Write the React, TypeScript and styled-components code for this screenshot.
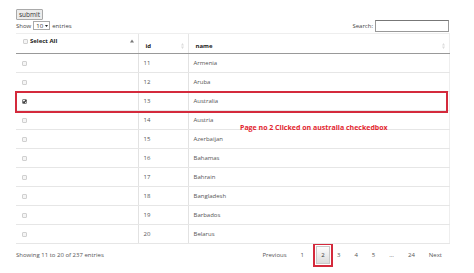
import React from "react";
import styled, { createGlobalStyle } from "styled-components";

const GlobalStyle = createGlobalStyle`
  html, body {
    margin: 0;
    padding: 0;
    background: #ffffff;
  }
  body {
    font-family: "Open Sans", "Liberation Sans", sans-serif;
    font-size: 6px;
    color: #444;
  }
`;

const Page = styled.div`
  width: 474px;
  height: 273px;
  padding: 9px 25px 0 16px;
  box-sizing: border-box;
  overflow: hidden;
`;

const SubmitButton = styled.button`
  display: block;
  height: 11px;
  padding: 0 2px;
  font-family: "Open Sans", "Liberation Sans", sans-serif;
  font-size: 6.5px;
  line-height: 9px;
  color: #333;
  background: #ececec;
  border: 1px solid #a9a9a9;
  border-radius: 1px;
`;

const Controls = styled.div`
  display: flex;
  justify-content: space-between;
  align-items: center;
  height: 13px;
  margin-top: -1px;
`;

const Label = styled.label`
  display: flex;
  align-items: center;
  gap: 2px;
  font-size: 6px;
  color: #444;
`;

const LengthSelect = styled.span`
  display: inline-flex;
  align-items: center;
  justify-content: space-between;
  width: 17px;
  height: 9px;
  padding: 0 1px 0 2px;
  border: 1px solid #aaa;
  font-size: 6px;
  line-height: 8px;
  color: #333;
  box-sizing: border-box;
`;

const SearchInput = styled.span`
  display: inline-block;
  width: 74px;
  height: 12px;
  border: 1px solid #999;
  border-top-color: #777;
  box-sizing: border-box;
`;

const TableWrap = styled.div`
  position: relative;
  margin-top: 1px;
`;

const Table = styled.table`
  width: 433px;
  border-collapse: collapse;
  table-layout: fixed;
  border-right: 1px solid #eee;
`;

const HeadCell = styled.th<{ $w: number; $top?: boolean }>`
  width: ${(p) => p.$w}px;
  height: 20px;
  padding: ${(p) => (p.$top ? "3px 4px 0 7px" : "5px 4px 0 7px")};
  vertical-align: ${(p) => (p.$top ? "top" : "middle")};
  text-align: left;
  font-size: 6px;
  font-weight: 700;
  color: #222;
  border-top: 1px solid #eee;
  border-left: 1px solid #e6e6e6;
  border-bottom: 1px solid #999;
  box-sizing: border-box;
  &:first-child {
    border-left: none;
  }
`;

const HeadInner = styled.div`
  display: flex;
  align-items: center;
  justify-content: space-between;
`;

const HeadTitle = styled.span`
  display: flex;
  align-items: center;
  gap: 2px;
`;

const Row = styled.tr`
  height: 19px;
`;

const Cell = styled.td`
  padding: 0 4px 0 5px;
  font-size: 6px;
  color: #555;
  border-left: 1px solid #e2e2e2;
  border-bottom: 1px solid #e6e6e6;
  white-space: nowrap;
  &:first-child {
    border-left: none;
    padding-left: 6px;
  }
`;

const Box = styled.span<{ $checked?: boolean }>`
  display: inline-block;
  width: 5px;
  height: 5px;
  border: 1px solid ${(p) => (p.$checked ? "#888" : "#d0d0d0")};
  background: ${(p) => (p.$checked ? "#eee" : "#f5f5f5")};
  border-radius: 1px;
  box-sizing: border-box;
  position: relative;
  vertical-align: middle;
`;

const CheckMark = styled.svg`
  position: absolute;
  left: -1px;
  top: -1px;
`;

const Highlight = styled.div`
  position: absolute;
  left: -1px;
  top: 58px;
  width: 433px;
  height: 22px;
  border: 2px solid #d42a3c;
  box-sizing: border-box;
  pointer-events: none;
`;

const Note = styled.div`
  position: absolute;
  left: 224px;
  top: 90px;
  font-size: 7px;
  font-weight: 700;
  color: #e3262f;
  white-space: nowrap;
`;

const Footer = styled.div`
  display: flex;
  justify-content: space-between;
  align-items: center;
  height: 21px;
`;

const Info = styled.div`
  font-size: 6px;
  color: #555;
`;

const Pager = styled.div`
  display: flex;
  align-items: center;
`;

const PageLink = styled.span`
  padding: 0 7px;
  font-size: 6px;
  color: #555;
`;

const Current = styled.span`
  display: inline-flex;
  padding: 1px;
  border: 2px solid #d42a3c;
  margin: 0 -3px 0 2px;
`;

const CurrentButton = styled.span`
  display: inline-flex;
  align-items: center;
  justify-content: center;
  width: 14px;
  height: 18px;
  box-sizing: border-box;
  border: 1px solid #c9c9c9;
  background: linear-gradient(#fdfdfd, #dcdcdc);
  font-size: 6px;
  color: #333;
`;

const SortIcon: React.FC<{ dir?: "up" | "both" }> = ({ dir = "both" }) =>
  dir === "up" ? (
    <svg width="4" height="4" viewBox="0 0 4 4">
      <path d="M0 3.5 L2 0.5 L4 3.5 Z" fill="#777" />
    </svg>
  ) : (
    <svg width="3" height="6" viewBox="0 0 3 6">
      <path d="M0 2.5 L1.5 0 L3 2.5 Z M0 3.5 L1.5 6 L3 3.5 Z" fill="#ddd" />
    </svg>
  );

const Checkbox: React.FC<{ checked?: boolean }> = ({ checked }) => (
  <Box $checked={checked}>
    {checked && (
      <CheckMark width="5" height="5" viewBox="0 0 5 5">
        <path d="M1 2.6 L2.1 3.7 L4.2 1.2" stroke="#222" strokeWidth="1.1" fill="none" />
      </CheckMark>
    )}
  </Box>
);

const rows = [
  { id: 11, name: "Armenia" },
  { id: 12, name: "Aruba" },
  { id: 13, name: "Australia", checked: true },
  { id: 14, name: "Austria" },
  { id: 15, name: "Azerbaijan" },
  { id: 16, name: "Bahamas" },
  { id: 17, name: "Bahrain" },
  { id: 18, name: "Bangladesh" },
  { id: 19, name: "Barbados" },
  { id: 20, name: "Belarus" },
];

export default function App() {
  return (
    <>
      <GlobalStyle />
      <Page>
        <SubmitButton>submit</SubmitButton>
        <Controls>
          <Label>
            Show
            <LengthSelect>
              10
              <svg width="3" height="2" viewBox="0 0 3 2">
                <path d="M0 0 L3 0 L1.5 2 Z" fill="#222" />
              </svg>
            </LengthSelect>
            entries
          </Label>
          <Label>
            Search:
            <SearchInput />
          </Label>
        </Controls>
        <TableWrap>
          <Table>
            <thead>
              <tr>
                <HeadCell $w={122} $top>
                  <HeadInner>
                    <HeadTitle>
                      <Checkbox />
                      Select All
                    </HeadTitle>
                    <SortIcon dir="up" />
                  </HeadInner>
                </HeadCell>
                <HeadCell $w={50}>
                  <HeadInner>
                    id
                    <SortIcon />
                  </HeadInner>
                </HeadCell>
                <HeadCell $w={261}>
                  <HeadInner>
                    name
                    <SortIcon />
                  </HeadInner>
                </HeadCell>
              </tr>
            </thead>
            <tbody>
              {rows.map((r) => (
                <Row key={r.id}>
                  <Cell>
                    <Checkbox checked={r.checked} />
                  </Cell>
                  <Cell>{r.id}</Cell>
                  <Cell>{r.name}</Cell>
                </Row>
              ))}
            </tbody>
          </Table>
          <Highlight />
          <Note>Page no 2 Clicked on australia checkedbox</Note>
        </TableWrap>
        <Footer>
          <Info>Showing 11 to 20 of 237 entries</Info>
          <Pager>
            <PageLink>Previous</PageLink>
            <PageLink>1</PageLink>
            <Current>
              <CurrentButton>2</CurrentButton>
            </Current>
            <PageLink>3</PageLink>
            <PageLink>4</PageLink>
            <PageLink>5</PageLink>
            <PageLink>…</PageLink>
            <PageLink>24</PageLink>
            <PageLink>Next</PageLink>
          </Pager>
        </Footer>
      </Page>
    </>
  );
}
